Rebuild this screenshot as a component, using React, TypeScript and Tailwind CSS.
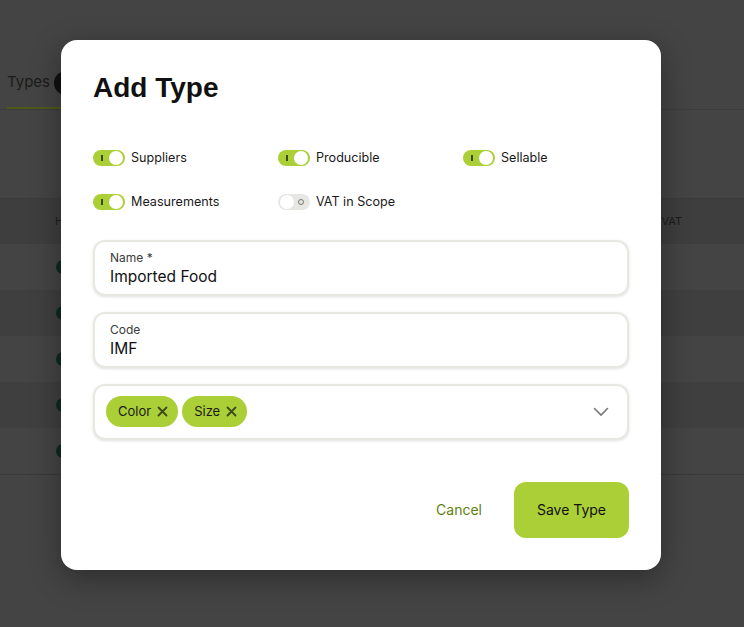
import React from "react";

const GREEN = "bg-[#abcf37]";

function Toggle({ on, label }: { on: boolean; label: string }) {
  return (
    <div className="flex items-center gap-[6px]">
      {on ? (
        <div className={`relative h-[16px] w-[32px] rounded-full ${GREEN}`}>
          <div className="absolute left-[8px] top-[5px] h-[6px] w-[2px] bg-[#3a4a10]" />
          <div className="absolute right-[2px] top-[1px] h-[14px] w-[14px] rounded-full bg-white" />
        </div>
      ) : (
        <div className="relative h-[16px] w-[32px] rounded-full bg-[#e6e6e2]">
          <div className="absolute left-[2px] top-[1px] h-[14px] w-[14px] rounded-full bg-white" />
          <div className="absolute right-[6px] top-[5px] h-[6px] w-[6px] rounded-full border-[1.5px] border-[#777]" />
        </div>
      )}
      <span className="text-[12.6px] text-[#1a1a1a]">{label}</span>
    </div>
  );
}

function Field({ label, value }: { label: string; value: string }) {
  return (
    <div className="flex h-[56px] flex-col justify-center rounded-[12px] border-2 border-[#e8e8e3] bg-white px-[15px] shadow-[0_1px_3px_rgba(0,0,0,0.12)]">
      <div className="text-[12px] leading-[19px] text-[#3a3a3a]">{label}</div>
      <div className="text-[15.5px] leading-[20px] text-[#111]">{value}</div>
    </div>
  );
}

function Chip({ label }: { label: string }) {
  return (
    <div className={`flex h-[31px] items-center gap-[6px] rounded-full ${GREEN} pl-[12px] pr-[10px]`}>
      <span className="text-[13px] text-[#1a1a1a]">{label}</span>
      <svg width="11" height="11" viewBox="0 0 11 11">
        <path d="M1.5 1.5 L9.5 9.5 M9.5 1.5 L1.5 9.5" stroke="#3d4a1e" strokeWidth="1.8" strokeLinecap="round" />
      </svg>
    </div>
  );
}

export default function App() {
  return (
    <div
      className="relative h-[627px] w-[744px] overflow-hidden bg-[#444444]"
      style={{ fontFamily: "Inter, 'Noto Sans', sans-serif" }}
    >
      {/* background page */}
      <div className="flex flex-col">
        <div className="h-[66px]" />
        <div className="flex h-[44px] items-start border-b border-[#3d3d3d] pl-[7px]">
          <div className="relative flex h-full items-start gap-[4px] pt-[5px]">
            <span className="text-[15px] leading-[22px] text-[#1c1c1c]">Types</span>
            <div className="h-[24px] w-[24px] rounded-full bg-[#111]" />
            <div className="absolute bottom-0 left-0 h-[2px] w-[60px] bg-[#4d5a1a]" />
          </div>
        </div>
        <div className="h-[88px]" />
        <div className="flex h-[46px] items-center justify-between border-t border-[#3b3b3b] bg-[#3e3e3e] pl-[55px] pr-[62px] text-[11px] text-[#1c1c1c]">
          <span>H</span>
          <span>VAT</span>
        </div>
        {[0, 1, 2, 3, 4].map((i) => (
          <div
            key={i}
            className={`flex h-[46px] items-center pl-[56px] ${i % 2 === 0 ? "bg-[#444444]" : "bg-[#3f3f3f]"}`}
          >
            <div className="h-[14px] w-[14px] rounded-full bg-[#0f2a1f]" />
          </div>
        ))}
        <div className="border-t border-[#3a3a3a]" />
      </div>

      {/* modal */}
      <div className="absolute left-[61px] top-[40px] flex h-[530px] w-[600px] flex-col rounded-[16px] bg-white px-[32px] pt-[30px] shadow-[0_8px_30px_rgba(0,0,0,0.35)]">
        <h1
          className="text-[28px] font-bold leading-[36px] text-[#111]"
          style={{ fontFamily: "'Liberation Sans', Arial, sans-serif" }}
        >
          Add Type
        </h1>
        <div className="mt-[43px] grid grid-cols-[185px_185px_165px] gap-y-[25px]">
          <Toggle on label="Suppliers" />
          <Toggle on label="Producible" />
          <Toggle on label="Sellable" />
          <Toggle on label="Measurements" />
          <Toggle on={false} label="VAT in Scope" />
        </div>
        <div className="mt-[28px] flex flex-col gap-[16px]">
          <Field label="Name *" value="Imported Food" />
          <Field label="Code" value="IMF" />
          <div className="flex h-[56px] items-center justify-between rounded-[12px] border-2 border-[#e8e8e3] bg-white pl-[11px] pr-[18px] shadow-[0_1px_3px_rgba(0,0,0,0.12)]">
            <div className="flex gap-[4px]">
              <Chip label="Color" />
              <Chip label="Size" />
            </div>
            <svg width="16" height="10" viewBox="0 0 16 10">
              <path d="M1.5 1.5 L8 8 L14.5 1.5" stroke="#777" strokeWidth="1.6" fill="none" strokeLinecap="round" />
            </svg>
          </div>
        </div>
        <div className="mt-[42px] flex items-center justify-end gap-[32px]">
          <span className="text-[14px] text-[#5f7f12]">Cancel</span>
          <div className={`flex h-[56px] w-[115px] items-center justify-center rounded-[12px] ${GREEN} text-[14px] text-[#111]`}>
            Save Type
          </div>
        </div>
      </div>
    </div>
  );
}
